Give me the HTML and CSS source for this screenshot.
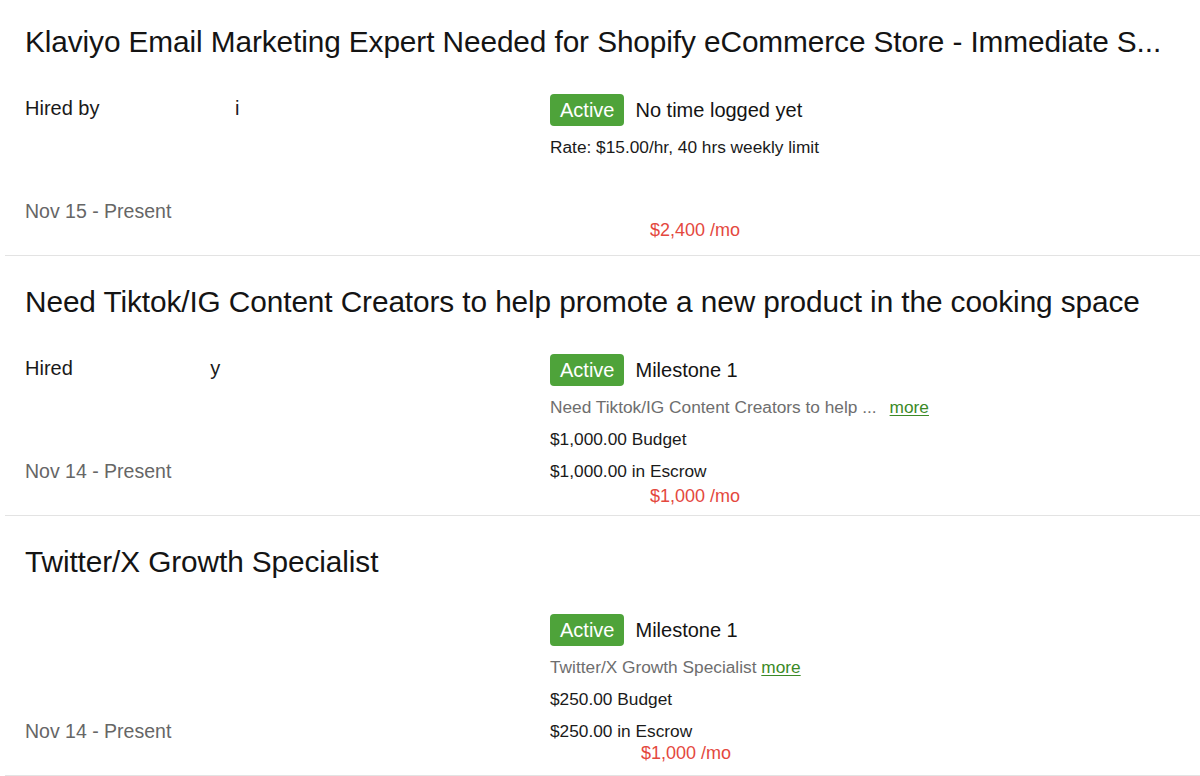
FILE: index.html
```html
<!DOCTYPE html>
<html lang="en">
<head>
<meta charset="utf-8">
<title>Contracts</title>
<link rel="stylesheet" href="styles.css">
</head>
<body>
<main class="list">
  <section class="row">
    <h2 class="title">Klaviyo Email Marketing Expert Needed for Shopify eCommerce Store - Immediate S...</h2>
    <div class="body">
      <div class="left">
        <div class="hired">Hired by <span class="redacted">i</span></div>
        <div class="date">Nov 15 - Present</div>
      </div>
      <div class="right">
        <div class="status">
          <span class="badge">Active</span>
          <span class="status-text">No time logged yet</span>
        </div>
        <div class="line">Rate: $15.00/hr, 40 hrs weekly limit</div>
      </div>
    </div>
    <div class="note note-a">$2,400 /mo</div>
  </section>

  <section class="row">
    <h2 class="title">Need Tiktok/IG Content Creators to help promote a new product in the cooking space</h2>
    <div class="body">
      <div class="left">
        <div class="hired">Hired <span class="redacted redacted-short">y</span></div>
        <div class="date">Nov 14 - Present</div>
      </div>
      <div class="right">
        <div class="status">
          <span class="badge">Active</span>
          <span class="status-text">Milestone 1</span>
        </div>
        <div class="line desc">Need Tiktok/IG Content Creators to help ...<a class="more more-gap" href="#">more</a></div>
        <div class="line">$1,000.00 Budget</div>
        <div class="line">$1,000.00 in Escrow</div>
      </div>
    </div>
    <div class="note note-b">$1,000 /mo</div>
  </section>

  <section class="row">
    <h2 class="title">Twitter/X Growth Specialist</h2>
    <div class="body">
      <div class="left">
        <div class="hired"></div>
        <div class="date">Nov 14 - Present</div>
      </div>
      <div class="right">
        <div class="status">
          <span class="badge">Active</span>
          <span class="status-text">Milestone 1</span>
        </div>
        <div class="line desc">Twitter/X Growth Specialist <a class="more" href="#">more</a></div>
        <div class="line">$250.00 Budget</div>
        <div class="line">$250.00 in Escrow</div>
      </div>
    </div>
    <div class="note note-c">$1,000 /mo</div>
  </section>
</main>
</body>
</html>
```

FILE: styles.css
```css
* { box-sizing: border-box; }

html, body {
  margin: 0;
  padding: 0;
  background: #ffffff;
}

body {
  font-family: "Liberation Sans", Arial, sans-serif;
  color: #1a1a1a;
  overflow: hidden;
}

.list {
  margin-top: -4px;
}

.row {
  position: relative;
  height: 260px;
  margin-left: 5px;
  padding: 28px 30px 0 20px;
  border-bottom: 1px solid #e3e3e3;
}

.title {
  margin: 0;
  font-size: 29.8px;
  line-height: 36px;
  font-weight: 400;
  color: #141414;
  white-space: nowrap;
  overflow: hidden;
  letter-spacing: -0.1px;
}

.body {
  display: flex;
  margin-top: 34px;
  height: 133px;
}

.left {
  width: 525px;
  flex: none;
  display: flex;
  flex-direction: column;
  justify-content: space-between;
}

.hired {
  font-size: 20px;
  line-height: 29px;
  color: #1a1a1a;
}

.redacted {
  display: inline-block;
  margin-left: 130px;
}

.redacted-short {
  margin-left: 132px;
}

.date {
  font-size: 19.5px;
  line-height: 32px;
  color: #666666;
}

.right {
  flex: 1;
  display: flex;
  flex-direction: column;
}

.status {
  display: flex;
  align-items: center;
  gap: 11px;
  height: 32px;
  margin-bottom: 5px;
}

.badge {
  display: inline-flex;
  align-items: center;
  height: 32px;
  padding: 0 10px;
  border-radius: 4px;
  background: #4ea33a;
  color: #ffffff;
  font-size: 20px;
}

.status-text {
  font-size: 20px;
  color: #141414;
}

.line {
  font-size: 17.3px;
  line-height: 32px;
  color: #1a1a1a;
}

.desc {
  color: #6e6e6e;
}

.more {
  color: #3b8a27;
  text-decoration: underline;
  text-underline-offset: 2px;
}

.more-gap {
  margin-left: 13px;
}

.note {
  position: absolute;
  font-size: 18px;
  line-height: 20px;
  color: #e4483e;
}

.note-a { left: 645px; top: 224px; }
.note-b { left: 645px; top: 230px; }
.note-c { left: 636px; top: 227px; }
```
